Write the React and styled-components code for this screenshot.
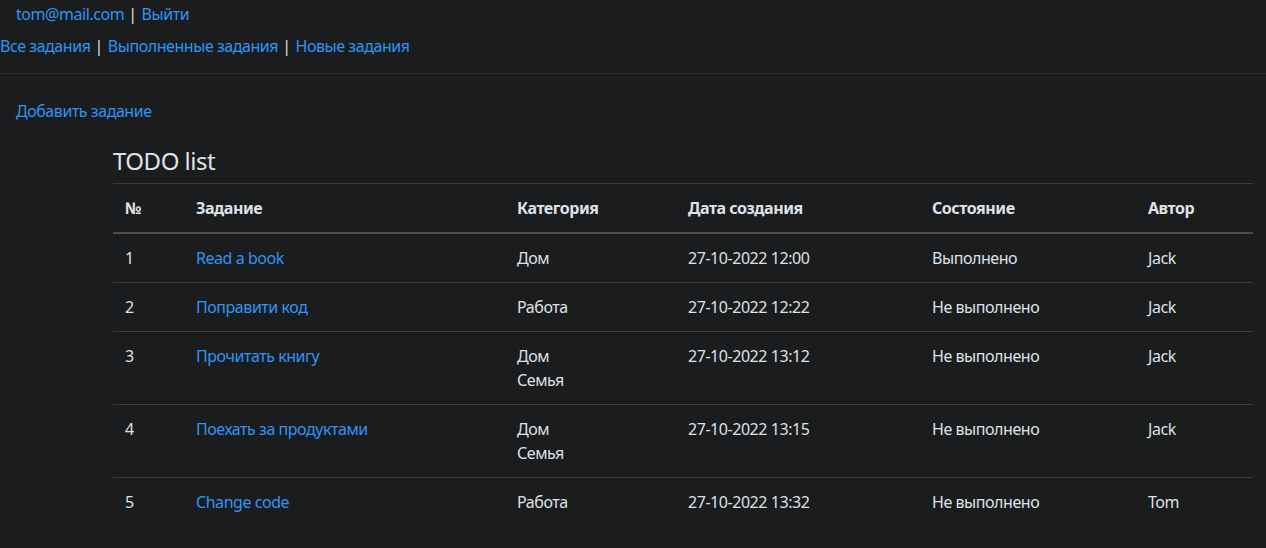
import React from 'react';
import styled, { createGlobalStyle } from 'styled-components';

const GlobalStyle = createGlobalStyle`
  html, body {
    margin: 0;
    padding: 0;
    background: #1b1c1e;
    color: #dee2e6;
    font-family: "Noto Sans", "Open Sans", sans-serif;
    font-size: 16px;
    line-height: 24px;
    letter-spacing: -0.45px;
  }
`;

const Page = styled.div`
  min-height: 548px;
  background: #1b1c1e;
`;

const Header = styled.header`
  padding-top: 2px;
  border-bottom: 1px solid #2c2d30;
  padding-bottom: 15px;
`;

const NavLine = styled.div`
  padding-left: ${p => p.$indent || 0}px;
  margin-bottom: ${p => p.$gap || 0}px;
  white-space: nowrap;
`;

const Link = styled.a`
  color: #2f95f5;
  text-decoration: none;
`;

const Sep = styled.span`
  color: #dee2e6;
  margin: 0 5px 0 4px;
`;

const AddLine = styled.div`
  padding: 25px 16px 0;
`;

const Section = styled.section`
  margin: 23px 13px 0 113px;
`;

const Title = styled.h2`
  margin: 0 0 8px;
  font-size: 24px;
  line-height: 29px;
  font-weight: 400;
  letter-spacing: -0.5px;
  color: #dee2e6;
`;

const Table = styled.table`
  width: 1140px;
  border-collapse: collapse;
  table-layout: fixed;
  border-top: 1px solid #3b3c3f;
`;

const Th = styled.th`
  text-align: left;
  font-weight: 700;
  padding: 12px;
  border-bottom: 2px solid #4a4c4f;
  vertical-align: top;
`;

const Td = styled.td`
  padding: 12px;
  vertical-align: top;
  border-bottom: ${p => (p.$last ? 'none' : '1px solid #3b3c3f')};
`;

const tasks = [
  { id: 1, name: 'Read a book', cats: ['Дом'], date: '27-10-2022 12:00', state: 'Выполнено', author: 'Jack' },
  { id: 2, name: 'Поправити код', cats: ['Работа'], date: '27-10-2022 12:22', state: 'Не выполнено', author: 'Jack' },
  { id: 3, name: 'Прочитать книгу', cats: ['Дом', 'Семья'], date: '27-10-2022 13:12', state: 'Не выполнено', author: 'Jack' },
  { id: 4, name: 'Поехать за продуктами', cats: ['Дом', 'Семья'], date: '27-10-2022 13:15', state: 'Не выполнено', author: 'Jack' },
  { id: 5, name: 'Change code', cats: ['Работа'], date: '27-10-2022 13:32', state: 'Не выполнено', author: 'Tom' },
];

const widths = [71, 321, 171, 244, 216, 117];

export default function App() {
  return (
    <Page>
      <GlobalStyle />
      <Header>
        <NavLine $indent={16} $gap={8}>
          <Link href="#">tom@mail.com</Link>
          <Sep>|</Sep>
          <Link href="#">Выйти</Link>
        </NavLine>
        <NavLine>
          <Link href="#">Все задания</Link>
          <Sep>|</Sep>
          <Link href="#">Выполненные задания</Link>
          <Sep>|</Sep>
          <Link href="#">Новые задания</Link>
        </NavLine>
      </Header>
      <AddLine>
        <Link href="#">Добавить задание</Link>
      </AddLine>
      <Section>
        <Title>TODO list</Title>
        <Table>
          <colgroup>
            {widths.map((w, i) => <col key={i} style={{ width: w }} />)}
          </colgroup>
          <thead>
            <tr>
              <Th>№</Th>
              <Th>Задание</Th>
              <Th>Категория</Th>
              <Th>Дата создания</Th>
              <Th>Состояние</Th>
              <Th>Автор</Th>
            </tr>
          </thead>
          <tbody>
            {tasks.map((t, i) => {
              const last = i === tasks.length - 1;
              return (
                <tr key={t.id}>
                  <Td $last={last}>{t.id}</Td>
                  <Td $last={last}><Link href="#">{t.name}</Link></Td>
                  <Td $last={last}>
                    {t.cats.map(c => <div key={c}>{c}</div>)}
                  </Td>
                  <Td $last={last}>{t.date}</Td>
                  <Td $last={last}>{t.state}</Td>
                  <Td $last={last}>{t.author}</Td>
                </tr>
              );
            })}
          </tbody>
        </Table>
      </Section>
    </Page>
  );
}
